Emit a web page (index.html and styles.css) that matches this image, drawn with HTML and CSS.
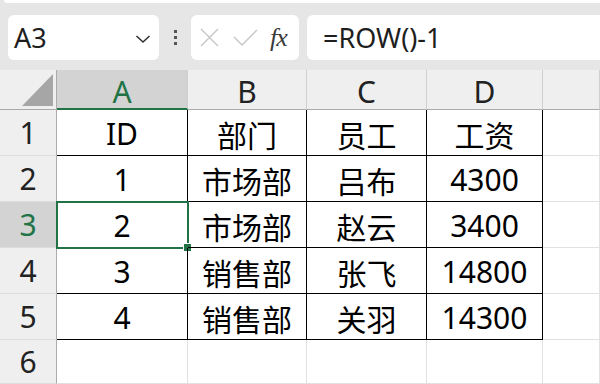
FILE: index.html
```html
<!DOCTYPE html>
<html lang="zh-CN">

<head>
  <meta charset="UTF-8">
  <meta name="viewport" content="width=device-width, initial-scale=1.0">
  <title>工资表</title>
  <link rel="stylesheet" href="styles.css">
</head>

<body>
  <div class="app">
    <div class="ribbon-edge"></div>

    <!-- 名称框 + 编辑栏 -->
    <div class="formula-bar">
      <div class="name-box">
        <span>A3</span>
        <svg class="chevron" width="16" height="10" viewBox="0 0 16 10">
          <path d="M1.5 2 L8 8 L14.5 2" fill="none" stroke="#333" stroke-width="1.6" />
        </svg>
      </div>
      <div class="grip"><i></i><i></i><i></i></div>
      <div class="fx-box">
        <svg class="cancel" width="19" height="19" viewBox="0 0 19 19">
          <path d="M1 1 L18 18 M18 1 L1 18" stroke="#c6c6c6" stroke-width="1.4" />
        </svg>
        <svg class="enter" width="25" height="17" viewBox="0 0 25 17">
          <path d="M1 8 L9 16 L24 1" fill="none" stroke="#c6c6c6" stroke-width="1.4" />
        </svg>
        <span class="fx">fx</span>
      </div>
      <div class="formula-input">=ROW()-1</div>
    </div>

    <!-- 工作表 -->
    <div class="sheet">
      <div class="corner"><div class="select-all"></div></div>
      <div class="col-head active">A</div>
      <div class="col-head">B</div>
      <div class="col-head">C</div>
      <div class="col-head">D</div>
      <div class="col-head"></div>

      <div class="row-head">1</div>
      <div class="cell data">ID</div>
      <div class="cell data">部门</div>
      <div class="cell data">员工</div>
      <div class="cell data">工资</div>
      <div class="cell"></div>

      <div class="row-head">2</div>
      <div class="cell data">1</div>
      <div class="cell data">市场部</div>
      <div class="cell data">吕布</div>
      <div class="cell data">4300</div>
      <div class="cell"></div>

      <div class="row-head active">3</div>
      <div class="cell data selected">2<span class="handle"></span></div>
      <div class="cell data">市场部</div>
      <div class="cell data">赵云</div>
      <div class="cell data">3400</div>
      <div class="cell"></div>

      <div class="row-head">4</div>
      <div class="cell data">3</div>
      <div class="cell data">销售部</div>
      <div class="cell data">张飞</div>
      <div class="cell data">14800</div>
      <div class="cell"></div>

      <div class="row-head">5</div>
      <div class="cell data">4</div>
      <div class="cell data">销售部</div>
      <div class="cell data">关羽</div>
      <div class="cell data">14300</div>
      <div class="cell"></div>

      <div class="row-head">6</div>
      <div class="cell"></div>
      <div class="cell"></div>
      <div class="cell"></div>
      <div class="cell"></div>
      <div class="cell"></div>
    </div>
  </div>
</body>

</html>
```

FILE: styles.css
```css
* {
  box-sizing: border-box;
}

body {
  margin: 0;
  overflow: hidden;
  font-family: 'Noto Sans', 'Noto Sans CJK SC', sans-serif;
  color: #000;
}

.app {
  width: 600px;
  height: 384px;
  display: flex;
  flex-direction: column;
  background: #e6e6e6;
}

.ribbon-edge {
  height: 3px;
  margin-left: 4px;
  background: #fff;
  border-bottom-left-radius: 6px;
}

/* 编辑栏 */
.formula-bar {
  height: 67px;
  display: flex;
  align-items: flex-start;
  padding: 12px 0 0 8px;
}

.name-box {
  width: 151px;
  height: 45px;
  background: #fff;
  border-radius: 6px;
  display: flex;
  align-items: center;
  justify-content: space-between;
  padding: 0 8px 0 6px;
  font-size: 27px;
  color: #1e1e1e;
}

.chevron {
  margin-top: 2px;
}

.grip {
  width: 32px;
  height: 45px;
  display: flex;
  flex-direction: column;
  align-items: center;
  justify-content: center;
  gap: 3px;
}

.grip i {
  width: 3px;
  height: 3px;
  background: #555;
}

.fx-box {
  width: 108px;
  height: 45px;
  background: #fff;
  border-radius: 6px;
  display: flex;
  align-items: center;
  padding-left: 9px;
}

.enter {
  margin-left: 14px;
}

.fx {
  margin-left: 12px;
  font-family: 'Liberation Serif', serif;
  font-style: italic;
  font-size: 26px;
  color: #3a3a3a;
  letter-spacing: -1px;
}

.formula-input {
  flex: 1;
  height: 45px;
  margin-left: 8px;
  background: #fff;
  border-radius: 6px 0 0 6px;
  display: flex;
  align-items: center;
  padding-left: 16px;
  font-size: 27px;
  color: #1e1e1e;
}

/* 表格区域 */
.sheet {
  flex: 1;
  display: grid;
  grid-template-columns: 57px 131px 119px 120px 116px 1fr;
  grid-template-rows: 40px repeat(5, 46px) 1fr;
  background: #fff;
  font-size: 30px;
}

.corner,
.col-head,
.row-head {
  background: #efefef;
  display: flex;
  align-items: center;
  justify-content: center;
  color: #222;
}

.corner {
  border-right: 1px solid #ababab;
  border-bottom: 1px solid #ababab;
  align-items: flex-end;
  justify-content: flex-end;
  padding: 0 3px 3px 0;
}

.select-all {
  width: 31px;
  height: 32px;
  background: #a6a6a6;
  clip-path: polygon(100% 0, 100% 100%, 0 100%);
}

.col-head {
  border-right: 1px solid #cfcfcf;
  border-bottom: 1px solid #ababab;
  padding-top: 4px;
}

.row-head {
  border-right: 1px solid #ababab;
  border-bottom: 1px solid #dcdcdc;
}

.col-head.active,
.row-head.active {
  background: #d3d3d3;
  color: #217346;
}

.col-head.active {
  border-bottom: 2px solid #217346;
}

.cell {
  position: relative;
  display: flex;
  align-items: center;
  justify-content: center;
  padding-top: 2px;
  border-right: 1px solid #e1e1e1;
  border-bottom: 1px solid #e1e1e1;
}

.cell.data {
  border-right-color: #000;
  border-bottom-color: #000;
}

.cell.selected::before {
  content: '';
  position: absolute;
  top: -1px;
  left: -1px;
  right: -2px;
  bottom: -2px;
  border: 2px solid #217346;
}

.handle {
  position: absolute;
  right: -4px;
  bottom: -4px;
  width: 7px;
  height: 7px;
  background: #217346;
  outline: 1px solid #fff;
}
```
